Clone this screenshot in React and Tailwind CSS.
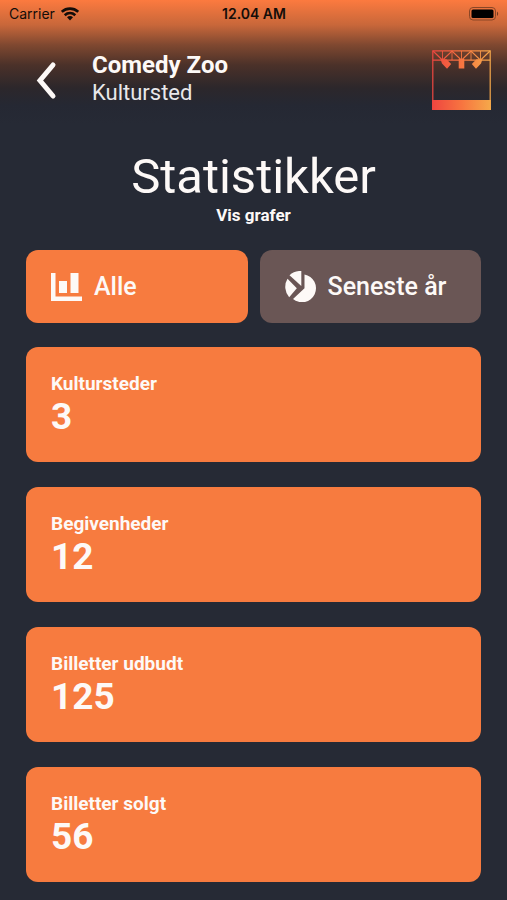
const stats = [
  { label: 'Kultursteder', value: 3 },
  { label: 'Begivenheder', value: 12 },
  { label: 'Billetter udbudt', value: 125 },
  { label: 'Billetter solgt', value: 56 },
];

function WifiIcon() {
  return (
    <svg viewBox="0 0 18 14" className="h-[14px] w-[18px]" fill="none" stroke="#140d09" strokeWidth="2.600" aria-hidden="true">
      <path d="M0.800 4.800C5.500 0.600 12.500 0.600 17.200 4.800" />
      <path d="M3.700 8.200C6.800 5.400 11.200 5.400 14.300 8.200" />
      <path d="M6 10.300C7.800 8.700 10.200 8.700 12 10.300L9 13.400Z" fill="#140d09" stroke="none" />
    </svg>
  );
}

function BatteryIcon() {
  return (
    <svg viewBox="0 0 30 14" className="h-[14px] w-[30px]" aria-hidden="true">
      <rect x="0.500" y="0.500" width="26" height="12.500" rx="3.500" fill="none" stroke="#8a4626" />
      <rect x="2.500" y="2.500" width="22" height="8.500" rx="1.500" fill="#000" />
      <path d="M28 4.500C29.600 5.200 29.600 8.300 28 9Z" fill="#70391f" />
    </svg>
  );
}

function StageLogo() {
  return (
    <svg viewBox="0 0 59 60" className="h-[60px] w-[59px]" role="img" aria-label="Comedy Zoo">
      <defs>
        <linearGradient id="stage" gradientUnits="userSpaceOnUse" x1="0" y1="0" x2="59" y2="0">
          <stop offset="0" stopColor="#ee4540" />
          <stop offset="0.5" stopColor="#f77440" />
          <stop offset="1" stopColor="#f5a94a" />
        </linearGradient>
      </defs>
      <g fill="none" stroke="url(#stage)" strokeWidth="1.200">
        <path d="M0.800 0.800H58.200V59H0.800Z" />
        <path d="M0.800 10.200H58.200" strokeWidth="1.300" />
        <path d="M1 1L10.500 10.200L20 1L29.500 10.200L39 1L48.500 10.200L58 1" />
        <path d="M10.500 1V10.200M20 1V10.200M29.500 1V10.200M39 1V10.200M48.500 1V10.200" strokeWidth="0.900" />
      </g>
      <g fill="url(#stage)">
        <rect x="0" y="50" width="59" height="10" />
        <rect x="26.700" y="9" width="5.600" height="9.500" />
        <path d="M8.500 9.200H14.500L19.200 14L15 18.800L10 13.500Z" />
        <path d="M50.500 9.200H44.500L39.800 14L44 18.800L49 13.500Z" />
      </g>
    </svg>
  );
}

function BarsIcon() {
  return (
    <svg viewBox="0 0 31 28" className="h-7 w-[31px] shrink-0" fill="currentColor" aria-hidden="true">
      <path d="M0 0H4.500V23.500H31V28H0Z" />
      <rect x="8" y="8" width="8" height="12" />
      <rect x="19.500" y="0" width="8" height="20" />
    </svg>
  );
}

function PieIcon() {
  return (
    <svg viewBox="0 0 31 31" className="size-[31px] shrink-0" fill="currentColor" aria-hidden="true">
      <path d="M19.500 3.500A14 14 0 1 1 8 28L19.500 17.200Z" />
      <path d="M16.300 0V15L4.500 4.300A15.500 15.500 0 0 1 16.300 0Z" />
      <path d="M2.500 7.800L11.800 17.200L4.200 26.200A15.500 15.500 0 0 1 2.500 7.800Z" />
    </svg>
  );
}

export default function App() {
  return (
    <div className="min-h-screen bg-[#262a35] font-['Roboto',sans-serif] text-[#fdf9f7]">
      <header className="h-[124px] bg-linear-[180deg,#fc7a3f_0px,#c8673a_25px,#7f4830_45px,#4b3129_65px,#2c272b_88px,#252833_105px,#262a35_124px]">
        <div className="grid h-7 grid-cols-3 items-center pl-[9px] pr-2 font-['Inter',sans-serif] text-sm text-[#140d09]">
          <div className="flex items-center gap-1.5">
            <span>Carrier</span>
            <WifiIcon />
          </div>
          <time className="text-center font-semibold">12.04 AM</time>
          <div className="flex justify-end">
            <BatteryIcon />
          </div>
        </div>
        <div className="flex items-center pl-8 pr-4 pt-[22px]">
          <button type="button" aria-label="Tilbage" className="flex h-[60px] w-7 items-center justify-center">
            <svg viewBox="0 0 28 40" className="h-10 w-7" fill="none" stroke="currentColor" strokeWidth="5" strokeLinecap="round" strokeLinejoin="miter" aria-hidden="true">
              <path d="M21 5L8 20.500L21 36" />
            </svg>
          </button>
          <div className="ml-8 flex-1 pb-0.5">
            <div className="text-2xl leading-7 font-bold">Comedy Zoo</div>
            <div className="text-[22px] leading-7 text-[#e9e8ea]">Kultursted</div>
          </div>
          <StageLogo />
        </div>
      </header>

      <main className="px-[26px] pb-[18px] pt-[25px]">
        <h1 className="text-center text-[49px] leading-[56px]">Statistikker</h1>
        <p className="text-center text-[17px] leading-5 font-bold">Vis grafer</p>

        <div className="mt-[25px] grid grid-cols-2 gap-3">
          <button type="button" className="flex h-[73px] items-center gap-3 rounded-xl bg-[#f77b3f] pl-[25px] text-[25px] font-medium">
            <BarsIcon />
            Alle
          </button>
          <button type="button" className="flex h-[73px] items-center gap-3 rounded-xl bg-[#6a5655] pl-[25px] text-[25px] font-medium">
            <PieIcon />
            Seneste år
          </button>
        </div>

        <dl className="mt-6 flex flex-col gap-[25px]">
          {stats.map((stat) => (
            <div key={stat.label} className="h-[115px] rounded-xl bg-[#f77b3f] px-[25px] pt-[25px]">
              <dt className="text-[19px] leading-6 font-bold">{stat.label}</dt>
              <dd className="text-[37px] leading-[42px] font-bold">{stat.value}</dd>
            </div>
          ))}
        </dl>
      </main>
    </div>
  );
}
